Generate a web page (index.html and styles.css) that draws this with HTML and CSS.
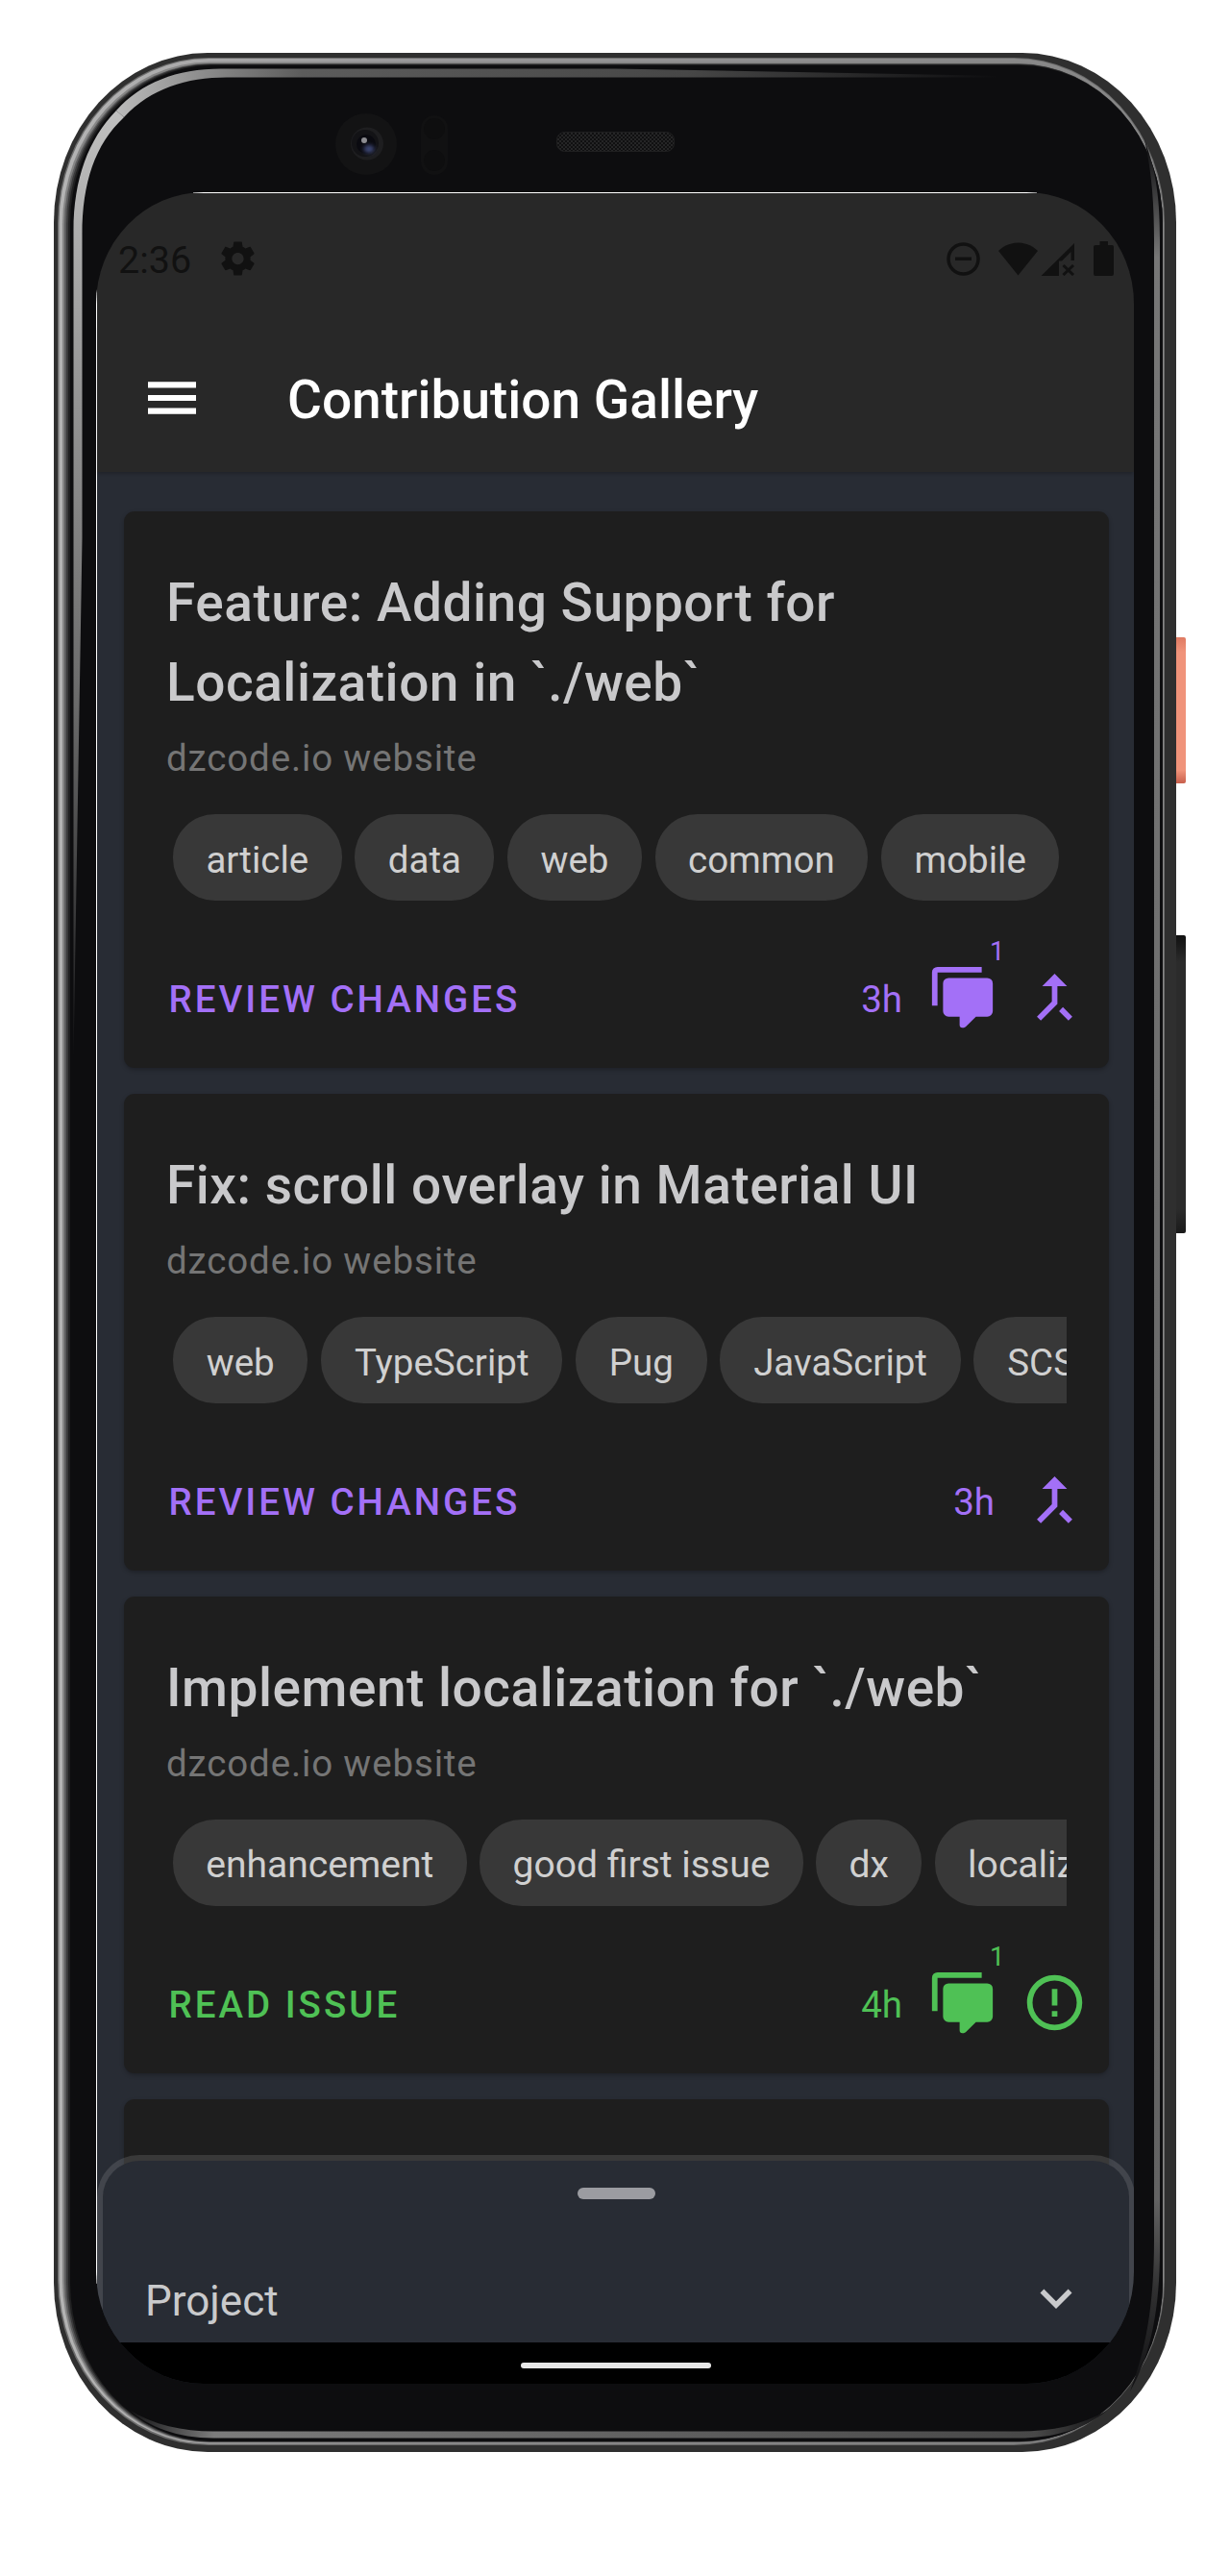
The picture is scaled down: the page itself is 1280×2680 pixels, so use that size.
FILE: index.html
```html
<!DOCTYPE html>
<html lang="en">
<head>
<meta charset="utf-8">
<title>Contribution Gallery</title>
<link rel="stylesheet" href="styles.css">
</head>
<body>
<svg width="0" height="0" class="sprite" aria-hidden="true">
  <symbol id="i-comments" viewBox="0 0 24 24"><path d="M12,23A1,1 0 0,1 11,22V19H7A2,2 0 0,1 5,17V7A2,2 0 0,1 7,5H21A2,2 0 0,1 23,7V17A2,2 0 0,1 21,19H16.9L13.2,22.71C13,22.89 12.76,23 12.5,23H12M3,15H1V3A2,2 0 0,1 3,1H19V3H3V15Z"/></symbol>
  <symbol id="i-merge" viewBox="0 0 24 24"><path d="M17,20.41L18.41,19L15,15.59L13.59,17M7.5,8H11V13.59L5.59,19L7,20.41L13,14.41V8H16.5L12,3.5"/></symbol>
  <symbol id="i-alert" viewBox="0 0 24 24"><path d="M11,15H13V17H11V15M11,7H13V13H11V7M12,2C6.47,2 2,6.5 2,12A10,10 0 0,0 12,22A10,10 0 0,0 22,12A10,10 0 0,0 12,2M12,20A8,8 0 0,1 4,12A8,8 0 0,1 12,4A8,8 0 0,1 20,12A8,8 0 0,1 12,20Z"/></symbol>
</svg>

<div class="device">
  <svg class="frame" viewBox="56 55 1180 2496" aria-hidden="true">
    <defs>
      <linearGradient id="g-edge" x1="0" x2="1" y1="0" y2="0"><stop offset="0" stop-color="#b4b4b4"/><stop offset=".3" stop-color="#9a999b"/><stop offset="1" stop-color="#858585"/></linearGradient>
      <linearGradient id="g-left" gradientUnits="userSpaceOnUse" x1="0" y1="110" x2="0" y2="1150"><stop offset="0" stop-color="#c0c0c0"/><stop offset=".3" stop-color="#939393"/><stop offset=".6" stop-color="#6a6a6a"/><stop offset="1" stop-color="#0d0d0f"/></linearGradient>
      <linearGradient id="g-top" gradientUnits="userSpaceOnUse" x1="110" y1="0" x2="1040" y2="0"><stop offset="0" stop-color="#c0c0c0"/><stop offset=".1" stop-color="#909090"/><stop offset=".22" stop-color="#5c5c5c"/><stop offset=".65" stop-color="#474747"/><stop offset="1" stop-color="#0d0d0f"/></linearGradient>
      <linearGradient id="g-right" gradientUnits="userSpaceOnUse" x1="0" y1="150" x2="0" y2="2500"><stop offset="0" stop-color="#0d0d0f"/><stop offset=".05" stop-color="#777"/><stop offset=".91" stop-color="#636363"/><stop offset=".95" stop-color="#303031"/><stop offset="1" stop-color="#0d0d0f"/></linearGradient>
      <linearGradient id="g-bottom" gradientUnits="userSpaceOnUse" x1="130" y1="0" x2="1160" y2="0"><stop offset="0" stop-color="#0d0d0f"/><stop offset=".09" stop-color="#7c7c7c"/><stop offset=".5" stop-color="#626262"/><stop offset=".92" stop-color="#484848"/><stop offset="1" stop-color="#0d0d0f"/></linearGradient>
      <linearGradient id="g-power" x1="0" x2="0" y1="0" y2="1"><stop offset="0" stop-color="#df7a62"/><stop offset=".1" stop-color="#f0937a"/><stop offset=".91" stop-color="#f0937a"/><stop offset="1" stop-color="#c85f4c"/></linearGradient>
      <linearGradient id="g-volume" x1="0" x2="0" y1="0" y2="1"><stop offset="0" stop-color="#111"/><stop offset=".09" stop-color="#2b2b2b"/><stop offset=".92" stop-color="#2b2b2b"/><stop offset="1" stop-color="#1a1a1a"/></linearGradient>
      <pattern id="mesh" width="4" height="4" patternUnits="userSpaceOnUse"><rect width="4" height="4" fill="#101011"/><rect width="2" height="2" fill="#252526"/><rect x="2" y="2" width="2" height="2" fill="#252526"/></pattern>
      <filter id="soft" x="-50%" y="-50%" width="200%" height="200%"><feGaussianBlur stdDeviation="2"/></filter>
    </defs>
    <rect x="1220" y="663" width="14" height="152" rx="2" fill="url(#g-power)"/>
    <rect x="1220" y="973" width="14" height="310" rx="2" fill="url(#g-volume)"/>
    <rect x="56" y="55" width="1168" height="2496" rx="160" ry="176" fill="#2f2f2f"/>
    <rect x="60" y="60" width="1152" height="2484" rx="157" ry="172" fill="#6c6c6c"/>
    <rect x="61.5" y="61" width="1149.5" height="2481.5" rx="156" ry="171" fill="url(#g-edge)"/>
    <rect x="65" y="64.5" width="1145" height="2477" rx="153" ry="169" fill="#858585"/>
    <rect x="67" y="66" width="1143" height="2475" rx="152" ry="168" fill="#5c5c5d"/>
    <rect x="69" y="66.5" width="1141" height="2474" rx="150" ry="167" fill="#3a3a3b"/>
    <rect x="71" y="67" width="1139" height="2473" rx="149" ry="166" fill="#202021"/>
    <rect x="73" y="68" width="1137" height="2472" rx="148" ry="165" fill="#0d0d0f"/>
    <path fill="url(#g-left)" d="M76.5,1100V240C76.5,186 92,145 121,115L129,122C99,150 85.5,190 85.5,244V560Z"/>
    <path fill="url(#g-top)" d="M121,115C147,86 184,71.5 230,71.5H640L1040,79V80.5H236C194,80.5 157,92 129,122Z"/>
    <path fill="url(#g-right)" d="M1191,145C1204,180 1207,210 1207,250V2340C1207,2400 1198,2450 1176,2488C1192,2445 1201,2400 1201,2330V250C1201,215 1199,180 1191,145Z"/>
    <path fill="url(#g-bottom)" d="M134,2507C160,2523 190,2529.5 222,2529.5H1060C1095,2529.5 1125,2523 1152,2508C1128,2528 1095,2536.5 1060,2536.5H222C185,2536.5 155,2525 134,2507Z"/>
    <circle cx="381" cy="150" r="32" fill="#131314"/>
    <circle cx="382" cy="149.5" r="17" fill="#1e1e20"/>
    <circle cx="380" cy="149" r="14" fill="#131316"/>
    <circle cx="381" cy="150" r="10" fill="#0a0a10"/>
    <ellipse cx="384" cy="155" rx="5.5" ry="4" fill="#3f4a78" filter="url(#soft)"/>
    <circle cx="379" cy="146" r="3" fill="#8d8d92"/>
    <rect x="438" y="120" width="28" height="62" rx="14" fill="#111112"/>
    <circle cx="452" cy="134" r="11" fill="#0e0e0f"/>
    <circle cx="452" cy="167" r="11" fill="#0e0e0f"/>
    <rect x="579.5" y="137.5" width="122" height="20" rx="8" fill="url(#mesh)" stroke="#1f1f20"/>
  </svg>

  <div class="screen">
    <div class="status">
      <span class="time">2:36</span>
      <svg class="gear" viewBox="2 2 20 20"><path d="M19.43 12.98c.04-.32.07-.64.07-.98s-.03-.66-.07-.98l2.11-1.65c.19-.15.24-.42.12-.64l-2-3.46c-.12-.22-.39-.3-.61-.22l-2.49 1c-.52-.4-1.08-.73-1.69-.98l-.38-2.65C14.46 2.18 14.25 2 14 2h-4c-.25 0-.46.18-.49.42l-.38 2.65c-.61.25-1.17.59-1.69.98l-2.49-1c-.23-.09-.49 0-.61.22l-2 3.46c-.13.22-.07.49.12.64l2.11 1.65c-.04.32-.07.65-.07.98s.03.66.07.98l-2.11 1.65c-.19.15-.24.42-.12.64l2 3.46c.12.22.39.3.61.22l2.49-1c.52.4 1.08.73 1.69.98l.38 2.65c.03.24.24.42.49.42h4c.25 0 .46-.18.49-.42l.38-2.65c.61-.25 1.17-.59 1.69-.98l2.49 1c.23.09.49 0 .61-.22l2-3.46c.12-.22.07-.49-.12-.64l-2.11-1.65zM12 15.5c-1.93 0-3.5-1.57-3.5-3.5s1.57-3.5 3.5-3.5 3.5 1.57 3.5 3.5-1.57 3.5-3.5 3.5z"/></svg>
      <svg class="indicators" viewBox="985 250 175 36">
        <circle cx="1002.5" cy="268.5" r="15.5" fill="none" stroke="#111" stroke-width="3.5"/>
        <rect x="994" y="266.5" width="17" height="3.5"/>
        <path d="M1059.5,285.5L1039,260C1051,248.5 1068,248.5 1080,260Z"/>
        <path d="M1083.5,286L1118,252V270H1114.5V261L1105,270.5H1102V286Z"/>
        <path d="M1106.5,275L1117,285M1117,275L1106.5,285" fill="none" stroke="#111" stroke-width="3"/>
        <path d="M1140,254H1144.5V250H1153V254H1157.5Q1159,254 1159,256V284Q1159,286 1157,286H1140Q1138,286 1138,284V256Q1138,254 1140,254Z"/>
      </svg>
    </div>

    <header class="appbar">
      <svg class="menu" viewBox="3 6 18 12"><path d="M3 18h18v-2.25H3V18zm0-4.9h18v-2.2H3v2.2zM3 6v2.25h18V6H3z"/></svg>
      <h1>Contribution Gallery</h1>
    </header>

    <main class="list">
      <article class="card review">
        <h2>Feature: Adding Support for<br>Localization in `./web`</h2>
        <p class="source">dzcode.io website</p>
        <div class="chips"><span>article</span><span>data</span><span>web</span><span>common</span><span>mobile</span></div>
        <div class="actions">
          <a class="link">REVIEW CHANGES</a>
          <span class="age">3h</span>
          <span class="comments"><svg class="icon"><use href="#i-comments"/></svg><span class="count">1</span></span>
          <svg class="icon"><use href="#i-merge"/></svg>
        </div>
      </article>

      <article class="card review">
        <h2>Fix: scroll overlay in Material UI</h2>
        <p class="source">dzcode.io website</p>
        <div class="chips wide"><span>web</span><span>TypeScript</span><span>Pug</span><span>JavaScript</span><span>SCSS</span></div>
        <div class="actions">
          <a class="link">REVIEW CHANGES</a>
          <span class="age">3h</span>
          <svg class="icon"><use href="#i-merge"/></svg>
        </div>
      </article>

      <article class="card issue">
        <h2>Implement localization for `./web`</h2>
        <p class="source">dzcode.io website</p>
        <div class="chips"><span>enhancement</span><span>good first issue</span><span>dx</span><span>localization</span></div>
        <div class="actions">
          <a class="link">READ ISSUE</a>
          <span class="age">4h</span>
          <span class="comments"><svg class="icon"><use href="#i-comments"/></svg><span class="count">1</span></span>
          <svg class="icon"><use href="#i-alert"/></svg>
        </div>
      </article>

      <article class="card"></article>
    </main>

    <section class="sheet">
      <div class="handle"></div>
      <div class="filter">
        <span class="label">Project</span>
        <svg class="chevron" viewBox="0 0 24 24"><path d="M7.41,8.58L12,13.17L16.59,8.58L18,10L12,16L6,10L7.41,8.58Z"/></svg>
      </div>
    </section>
    <nav class="navbar"><div class="pill"></div></nav>
  </div>
</div>
</body>
</html>
```
FILE: styles.css
```css
* { box-sizing: border-box; }

body {
  margin: 0;
  background: #fff;
  font-family: Roboto, sans-serif;
}

svg { display: block; flex: none; }
.sprite { position: absolute; }

.device {
  position: relative;
  width: 1180px;
  height: 2496px;
  margin: 55px 0 0 56px;
  padding: 145px 0 0 44px;
}

.frame {
  position: absolute;
  inset: 0;
  width: 1180px;
  height: 2496px;
}

/* Hairline highlights run along the straight part of the top and left edges. */
.screen {
  position: relative;
  display: flex;
  flex-direction: column;
  width: 1080px;
  height: 2280px;
  padding: 1px 0 0 1px;
  border-radius: 112px / 116px;
  overflow: hidden;
  background:
    linear-gradient(#fff, #fff) 101px 0 / 878px 1px no-repeat,
    linear-gradient(#fff, #fff) 0 98px / 1px 2078px no-repeat,
    #0d0d0f;
}

.status {
  display: flex;
  flex: none;
  align-items: center;
  height: 136px;
  padding: 0 20px 0 22px;
  background: #282828;
  color: #111;
  fill: #111;
}

.time { width: 107px; padding-top: 3px; font-size: 39.5px; line-height: 48px; }
.gear { width: 35px; height: 36px; }
.indicators { width: 175px; height: 36px; margin-left: auto; }

.appbar {
  position: relative;
  display: flex;
  flex: none;
  align-items: center;
  gap: 95px;
  height: 154px;
  padding-left: 53px;
  background: #282828;
  box-shadow: 0 3px 3px -1px rgba(0, 0, 0, .2);
  color: #fff;
}

.menu { width: 50px; height: 34px; fill: #fff; }

h1, h2, p { margin: 0; }

h1 { padding-top: 3px; font-size: 55px; font-weight: 500; line-height: 66px; }

.list {
  display: flex;
  flex: 1;
  flex-direction: column;
  gap: 27px;
  min-height: 0;
  padding: 41px 26px 0 28px;
  overflow: hidden;
  background: #282c34;
}

.card {
  flex: none;
  height: 496px;
  padding: 54px 22px 0 44px;
  border-radius: 11px;
  background: #1e1e1e;
  box-shadow: 0 2px 4px rgba(0, 0, 0, .25);
}

.card:first-child { height: 579px; }
.review { color: #a370f7; fill: #a370f7; }
.issue { color: #4fc155; fill: #4fc155; }

.card h2 {
  color: #c9c9cb;
  font-size: 55px;
  font-weight: 500;
  line-height: 83px;
  letter-spacing: .52px;
}

.source {
  color: #757575;
  font-size: 38.5px;
  line-height: 55px;
  letter-spacing: .86px;
  margin-top: 9px;
}

.chips {
  display: flex;
  gap: 13.75px;
  width: 937px;
  margin-top: 31px;
  padding-left: 7px;
  overflow: hidden;
}

.chips span {
  flex: none;
  height: 90px;
  padding: 0 34.4px;
  border-radius: 44px;
  background: #383838;
  color: #d0d0d0;
  font-size: 38.5px;
  line-height: 95px;
}

.chips.wide span { padding: 0 34.75px; }
.issue .chips span { padding: 0 34.2px; font-size: 39.1px; }

.actions {
  display: flex;
  align-items: center;
  height: 69px;
  margin-top: 66px;
  padding-left: 2.5px;
}

.link {
  margin-right: auto;
  padding-top: 4px;
  font-size: 38.5px;
  font-weight: 500;
  line-height: 48px;
  letter-spacing: 3px;
}

.age { margin-right: 28px; padding-top: 4px; font-size: 38.5px; line-height: 48px; }
.icon { width: 69px; height: 69px; }
.comments { position: relative; margin-right: 27px; }

.count {
  position: absolute;
  left: 63px;
  top: -30px;
  font-size: 27.5px;
  line-height: 34px;
}

.sheet {
  position: absolute;
  left: 1px;
  right: -1px;
  top: 2042px;
  height: 240px;
  border: 6px solid rgba(255, 255, 255, .12);
  border-bottom: 0;
  border-radius: 44px 44px 0 0;
  background: #282c34;
  background-clip: padding-box;
}

.handle {
  width: 81px;
  height: 12px;
  margin: 28px auto 0;
  border-radius: 6px;
  background: #9b9ca1;
}

.filter {
  display: flex;
  align-items: center;
  justify-content: space-between;
  height: 66px;
  margin-top: 70px;
  padding: 0 43px 0 44px;
  color: #c9cacc;
  fill: #c9cacc;
  font-size: 44px;
  line-height: 66px;
}

.label { padding-top: 5px; }
.chevron { width: 66px; height: 66px; }

.navbar {
  position: relative;
  display: flex;
  flex: none;
  justify-content: center;
  height: 43px;
  padding-top: 21px;
  background: #000;
}

.pill { width: 198px; height: 6px; border-radius: 3px; background: #e8e8e8; }
```
